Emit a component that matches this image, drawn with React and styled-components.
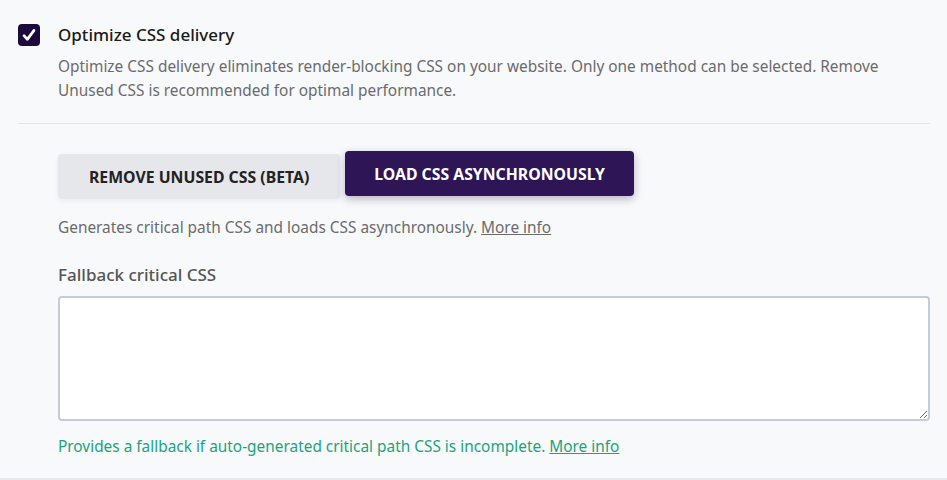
import styled, { createGlobalStyle } from "styled-components";

const GlobalStyle = createGlobalStyle`
  html, body {
    margin: 0;
    padding: 0;
    background: #f8f9fb;
    font-family: "Noto Sans", "Open Sans", sans-serif;
  }
  * { box-sizing: border-box; }
`;

const Section = styled.div`
  width: 947px;
  height: 480px;
  padding: 24px 17px 0 18px;
  border-bottom: 2px solid #e8eaed;
  overflow: hidden;
`;

const Header = styled.div`
  display: flex;
  align-items: flex-start;
  gap: 18px;
`;

const CheckBox = styled.span`
  flex: none;
  width: 22px;
  height: 22px;
  border-radius: 4px;
  background: #1d0a3d;
  display: flex;
  align-items: center;
  justify-content: center;
`;

const HeaderText = styled.div`
  display: flex;
  flex-direction: column;
`;

const Title = styled.div`
  font-size: 17px;
  line-height: 22px;
  font-weight: 500;
  color: #1a1a1a;
`;

const Desc = styled.p`
  margin: 9px 0 0;
  font-size: 15.4px;
  line-height: 24px;
  color: #6b6b6b;
`;

const Divider = styled.hr`
  margin: 20px 0 0;
  border: 0;
  border-top: 1px solid #e2e4e8;
`;

const Body = styled.div`
  padding: 27px 0 0 40px;
`;

const Tabs = styled.div`
  display: flex;
  align-items: flex-start;
  gap: 5px;
`;

const Tab = styled.button`
  font-family: inherit;
  border: 0;
  border-radius: 4px;
  height: 45px;
  padding: 0 ${(p) => (p.$active ? "29px" : "31px")};
  font-size: 15.8px;
  font-weight: 700;
  text-transform: uppercase;
  cursor: pointer;
  color: ${(p) => (p.$active ? "#ffffff" : "#222222")};
  background: ${(p) => (p.$active ? "#2e1656" : "#e5e7eb")};
  margin-top: ${(p) => (p.$active ? "0" : "3px")};
  box-shadow: ${(p) =>
    p.$active ? "0 3px 8px rgba(30, 20, 60, 0.3)" : "0 2px 5px rgba(0, 0, 0, 0.06)"};
`;

const Hint = styled.p`
  margin: ${(p) => (p.$tone === "success" ? "15px" : "18px")} 0 0;
  font-size: 15.4px;
  line-height: 22px;
  color: ${(p) => (p.$tone === "success" ? "#1ba37a" : "#6b6b6b")};

  a {
    color: inherit;
    text-decoration: underline;
  }
`;

const Label = styled.label`
  display: block;
  margin-top: 25px;
  font-size: 17px;
  line-height: 22px;
  font-weight: 500;
  color: #555555;
`;

const TextArea = styled.textarea`
  display: block;
  width: 100%;
  height: 125px;
  margin-top: 10px;
  border: 2px solid #c5ccd5;
  border-radius: 4px;
  background: #ffffff;
  font-family: inherit;
  font-size: 14px;
  resize: vertical;
  outline: none;
`;

const Check = () => (
  <svg width="16" height="16" viewBox="0 0 24 24" fill="none">
    <path d="M4.5 13l5 5.5L19.5 5" stroke="#fff" strokeWidth="4" strokeLinecap="round" strokeLinejoin="round" />
  </svg>
);

export default function App() {
  return (
    <>
      <GlobalStyle />
      <Section>
        <Header>
          <CheckBox>
            <Check />
          </CheckBox>
          <HeaderText>
            <Title>Optimize CSS delivery</Title>
            <Desc>
              Optimize CSS delivery eliminates render-blocking CSS on your website. Only one method can be
              selected. Remove Unused CSS is recommended for optimal performance.
            </Desc>
          </HeaderText>
        </Header>
        <Divider />
        <Body>
          <Tabs>
            <Tab>Remove Unused CSS (Beta)</Tab>
            <Tab $active>Load CSS Asynchronously</Tab>
          </Tabs>
          <Hint>
            Generates critical path CSS and loads CSS asynchronously. <a href="#">More info</a>
          </Hint>
          <Label>Fallback critical CSS</Label>
          <TextArea />
          <Hint $tone="success">
            Provides a fallback if auto-generated critical path CSS is incomplete. <a href="#">More info</a>
          </Hint>
        </Body>
      </Section>
    </>
  );
}
